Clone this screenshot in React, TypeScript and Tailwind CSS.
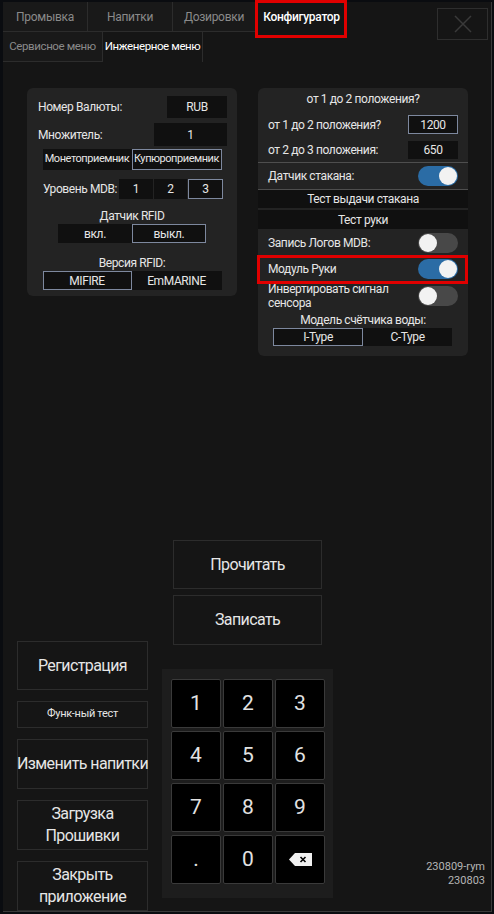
import { ReactNode } from 'react'

function Toggle({ on }: { on: boolean }) {
  return (
    <div
      className={`w-[40px] h-[20px] rounded-full flex items-center px-[1px] ${
        on ? 'bg-[#2b6ca5] justify-end' : 'bg-[#484848] justify-start'
      }`}
    >
      <div className="w-[18px] h-[18px] rounded-full bg-[#f2f2f2]" />
    </div>
  )
}

function Opt({ children, active, w, h }: { children: ReactNode; active?: boolean; w: string; h: string }) {
  return (
    <div
      className={`${w} ${h} flex items-center justify-center whitespace-nowrap bg-[#101010] border ${
        active ? 'border-[#7d889e]' : 'border-transparent'
      }`}
    >
      {children}
    </div>
  )
}

function Key({ children }: { children: ReactNode }) {
  return (
    <div className="w-[50px] h-[49px] bg-black border border-[#3a3a3a] rounded-[2px] flex items-center justify-center text-[21px] text-[#e2e2e2]">
      {children}
    </div>
  )
}

function SideButton({ children, h, small }: { children: ReactNode; h: string; small?: boolean }) {
  return (
    <div
      className={`${h} w-[131px] border border-[#2c2c2c] flex items-center justify-center text-center whitespace-nowrap text-[#e6e6e6] ${
        small ? 'text-[11px] tracking-[-0.3px]' : 'text-[16px] leading-[22px] tracking-[-0.6px]'
      }`}
    >
      {children}
    </div>
  )
}

export default function App() {
  const tabs = ['Промывка', 'Напитки', 'Дозировки']
  const widths = ['w-[85px]', 'w-[85px]', 'w-[83px]']

  return (
    <div className="w-[494px] h-[914px] bg-[#0a0c10] pt-[2px] pl-[3px] pr-[2px] pb-[2px] font-['Roboto','Noto_Sans',sans-serif]">
      <div className="h-full flex flex-col bg-[#151515] border-r border-b border-[#3a3a3a]">
        {/* Tabs */}
        <div className="flex text-[12px] tracking-[-0.3px] whitespace-nowrap">
          <div className="flex flex-col">
            <div className="flex h-[30px]">
              {tabs.map((t, i) => (
                <div
                  key={t}
                  className={`${widths[i]} flex items-center justify-center bg-[#191919] border-r border-b border-[#2c2c2c] text-[#8a8a8a]`}
                >
                  {t}
                </div>
              ))}
              <div className="relative w-[91px] flex items-center justify-center font-medium text-white">
                Конфигуратор
                <div className="absolute left-[-1px] right-0 top-[-2px] bottom-[-6px] border-[3px] border-[#e00000]" />
              </div>
            </div>
            <div className="flex h-[30px] text-[11.5px] tracking-[-0.4px]">
              <div className="w-[100px] flex items-center justify-center bg-[#191919] border-r border-b border-[#2c2c2c] text-[#8a8a8a]">
                Сервисное меню
              </div>
              <div className="w-[100px] flex items-center justify-center border-r border-[#2c2c2c] text-white">
                Инженерное меню
              </div>
            </div>
          </div>
          <div className="ml-auto mt-[6px] mr-[3px] w-[51px] h-[32px] border border-[#2e2e2e] flex items-center justify-center">
            <svg width="20" height="20" viewBox="0 0 20 20">
              <path d="M2 2 L18 18 M18 2 L2 18" stroke="#3a3a3a" strokeWidth="1.5" />
            </svg>
          </div>
        </div>

        {/* Panels */}
        <div className="flex items-start gap-[21px] pl-[24px] pt-[26px] text-[12px] tracking-[-0.4px] text-[#e6e6e6] whitespace-nowrap">
          {/* Left panel */}
          <div className="w-[210px] bg-[#232323] rounded-[6px] pt-[8px] pb-[6px] flex flex-col">
            <div className="flex items-center h-[22px] pl-[11px] pr-[10px]">
              <span>Номер Валюты:</span>
              <div className="ml-auto w-[60px] h-[22px] bg-[#101010] flex items-center justify-center">RUB</div>
            </div>
            <div className="flex items-center h-[23px] mt-[5px] pl-[11px] pr-[10px]">
              <span>Множитель:</span>
              <div className="ml-auto w-[73px] h-[23px] bg-[#101010] flex items-center justify-center">1</div>
            </div>
            <div className="flex justify-center mt-[3px] text-[11px] tracking-[-0.45px]">
              <Opt w="w-[89px]" h="h-[21px]">Монетоприемник</Opt>
              <Opt w="w-[90px]" h="h-[21px]" active>Купюроприемник</Opt>
            </div>
            <div className="flex items-center h-[20px] mt-[9px] pl-[16px] pr-[14px]">
              <span>Уровень MDB:</span>
              <div className="ml-auto flex gap-[1px]">
                <Opt w="w-[34px]" h="h-[20px]">1</Opt>
                <Opt w="w-[33px]" h="h-[20px]">2</Opt>
                <Opt w="w-[35px]" h="h-[20px]" active>3</Opt>
              </div>
            </div>
            <div className="mt-[10px] leading-[14px] text-center">Датчик RFID</div>
            <div className="flex justify-center mt-[1px]">
              <Opt w="w-[74px]" h="h-[19px]">вкл.</Opt>
              <Opt w="w-[74px]" h="h-[19px]" active>выкл.</Opt>
            </div>
            <div className="mt-[13px] leading-[14px] text-center">Версия RFID:</div>
            <div className="flex justify-center mt-[1px]">
              <Opt w="w-[89px]" h="h-[19px]" active>MIFIRE</Opt>
              <Opt w="w-[90px]" h="h-[19px]">EmMARINE</Opt>
            </div>
          </div>

          {/* Right panel */}
          <div className="w-[210px] bg-[#232323] rounded-[6px] pt-[4px] pb-[10px] flex flex-col">
            <div className="leading-[14px] text-center">от 1 до 2 положения?</div>
            <div className="flex items-center h-[19px] mt-[9px] pl-[10px] pr-[10px]">
              <span>от 1 до 2 положения?</span>
              <div className="ml-auto w-[50px] h-[19px] bg-[#101010] border border-[#7d889e] flex items-center justify-center">1200</div>
            </div>
            <div className="flex items-center h-[18px] mt-[7px] pl-[10px] pr-[10px]">
              <span>от 2 до 3 положения:</span>
              <div className="ml-auto w-[50px] h-[18px] bg-[#101010] flex items-center justify-center">650</div>
            </div>
            <div className="mt-[3px] h-px bg-[#4e4e4e]" />
            <div className="flex items-center h-[26px] pl-[10px] pr-[10px]">
              <span>Датчик стакана:</span>
              <div className="ml-auto"><Toggle on /></div>
            </div>
            <div className="h-px bg-[#4e4e4e]" />
            <div className="h-[18px] bg-[#101010] flex items-center justify-center">Тест выдачи стакана</div>
            <div className="h-[19px] mt-[2px] bg-[#101010] flex items-center justify-center">Тест руки</div>
            <div className="flex items-center h-[27px] pl-[10px] pr-[10px]">
              <span>Запись Логов MDB:</span>
              <div className="ml-auto"><Toggle on={false} /></div>
            </div>
            <div className="relative flex items-center h-[26px] pl-[10px] pr-[10px]">
              <span>Модуль Руки</span>
              <div className="ml-auto"><Toggle on /></div>
              <div className="absolute left-[-1px] right-0 top-[-1px] bottom-[-2px] border-[3px] border-[#e00000]" />
            </div>
            <div className="flex items-center h-[28px] pl-[10px] pr-[10px]">
              <span className="leading-[14px]">Инвертировать сигнал<br />сенсора</span>
              <div className="ml-auto"><Toggle on={false} /></div>
            </div>
            <div className="mt-[3px] leading-[14px] text-center">Модель счётчика воды:</div>
            <div className="flex pl-[15px] mt-[1px]">
              <Opt w="w-[90px]" h="h-[18px]" active>I-Type</Opt>
              <Opt w="w-[89px]" h="h-[18px]">C-Type</Opt>
            </div>
          </div>
        </div>

        {/* Bottom area */}
        <div className="mt-auto flex items-end pl-[14px]">
          <div className="flex flex-col gap-[11px]">
            <SideButton h="h-[49px]">Регистрация</SideButton>
            <SideButton h="h-[27px]" small>Функ-ный тест</SideButton>
            <SideButton h="h-[50px]">Изменить напитки</SideButton>
            <SideButton h="h-[50px]">Загрузка<br />Прошивки</SideButton>
            <SideButton h="h-[50px]">Закрыть<br />приложение</SideButton>
          </div>

          <div className="ml-[14px] mb-[13px] w-[171px] flex flex-col text-[16px] tracking-[-0.6px] text-[#e6e6e6]">
            <div className="ml-[11px] w-[149px] h-[49px] border border-[#2c2c2c] flex items-center justify-center">
              Прочитать
            </div>
            <div className="ml-[11px] mt-[6px] w-[149px] h-[50px] border border-[#2c2c2c] flex items-center justify-center">
              Записать
            </div>
            <div className="mt-[24px] bg-[#1d1d1d] pt-[10px] pb-[14px] pl-[9px] pr-[7px] tracking-normal">
              <div className="grid grid-cols-[50px_50px_50px] gap-x-[2px] gap-y-[3px]">
                {['1', '2', '3', '4', '5', '6', '7', '8', '9', '.', '0'].map((k) => (
                  <Key key={k}>{k}</Key>
                ))}
                <Key>
                  <svg width="23" height="13" viewBox="0 0 23 13">
                    <polygon points="0,6.5 6,0 23,0 23,13 6,13" fill="#f0f0f0" />
                    <path d="M11.5 4 L16.5 9 M16.5 4 L11.5 9" stroke="#000" strokeWidth="1.6" />
                  </svg>
                </Key>
              </div>
            </div>
          </div>

          <div className="flex-1 mb-[23px] pr-[6px] text-right text-[11px] leading-[14px] text-[#b5b5b5]">
            230809-rym
            <br />
            230803
          </div>
        </div>
      </div>
    </div>
  )
}
